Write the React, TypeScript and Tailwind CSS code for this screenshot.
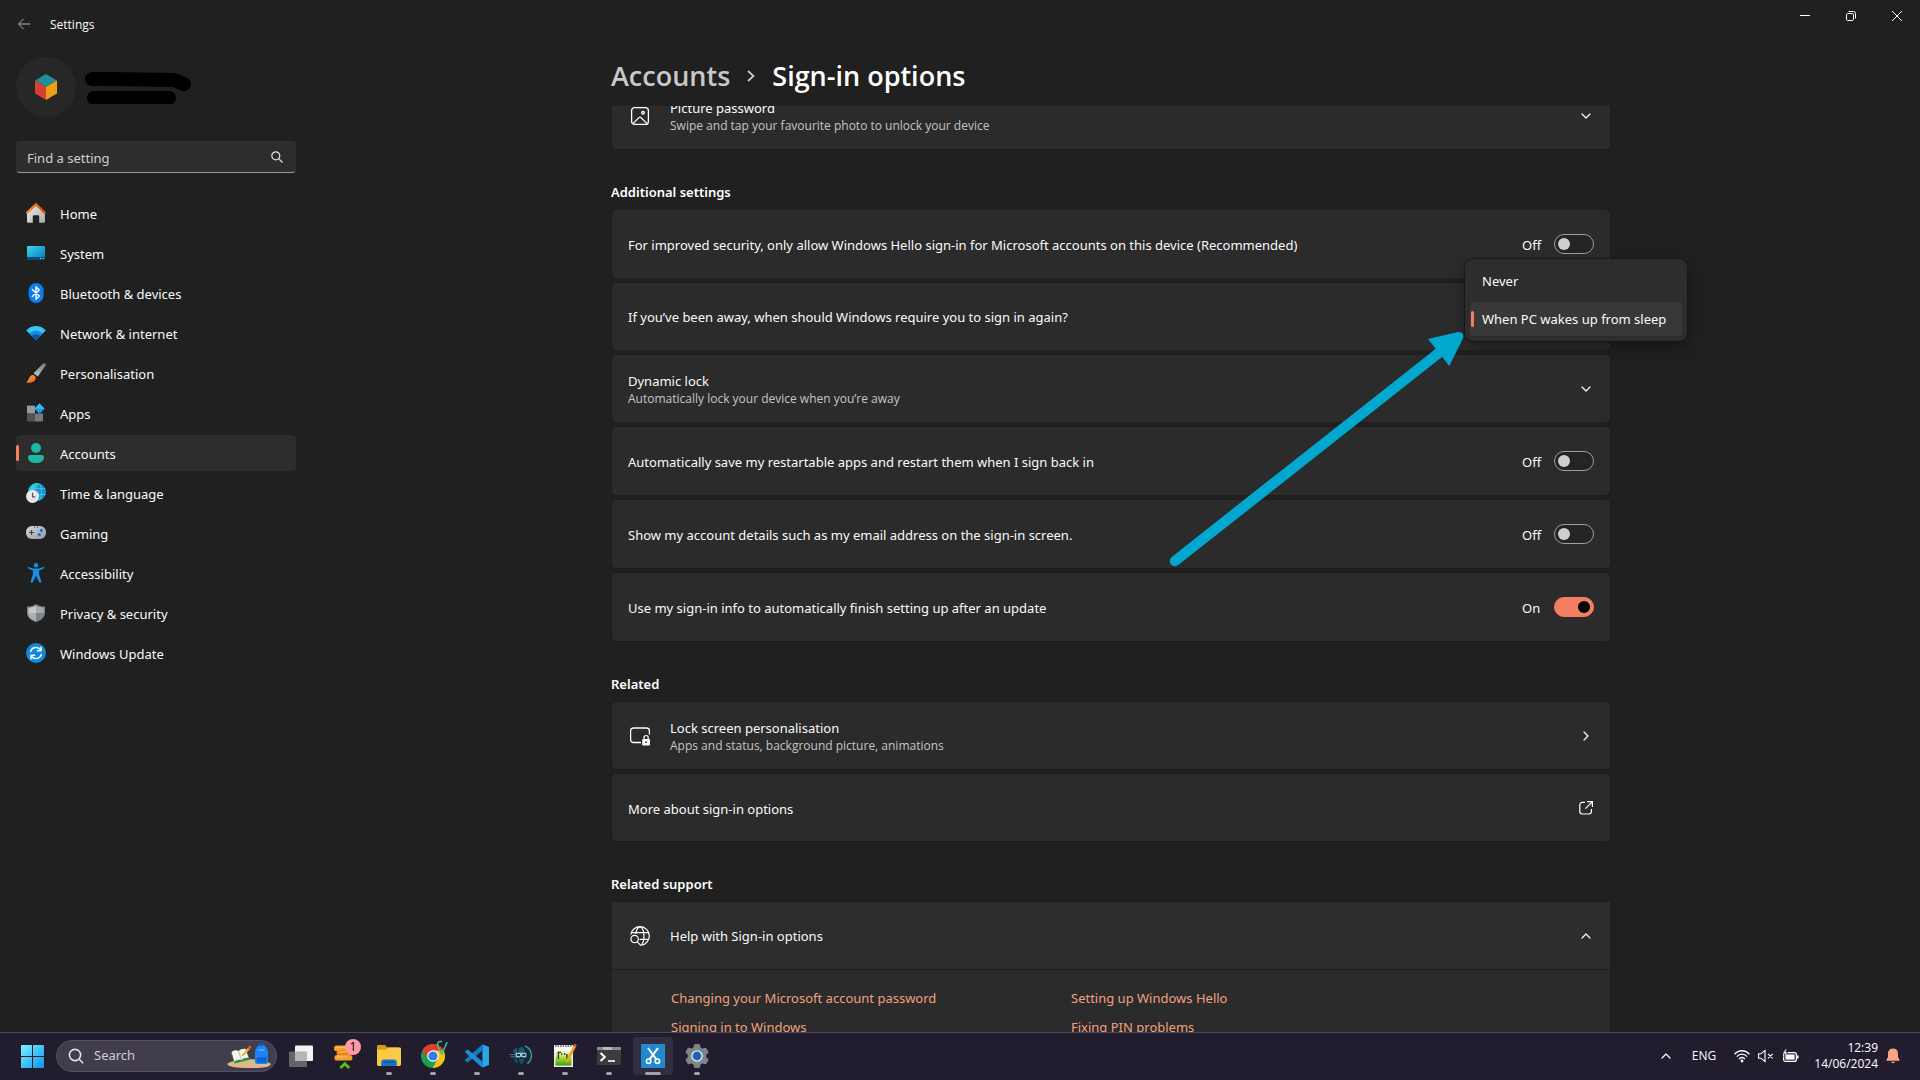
import { useState } from "react";
import type { ReactNode } from "react";
import { ChevronDown, ChevronRight, ChevronUp } from "lucide-react";

/* ---------- Navigation icons ---------- */

const HomeIcon = () => (
  <svg viewBox="0 0 20 20" className="size-5">
    <defs>
      <linearGradient id="homeWall" x1="0" y1="0" x2="1" y2="1">
        <stop offset="0" stopColor="#f0f0f0" />
        <stop offset="1" stopColor="#a8a8a8" />
      </linearGradient>
      <linearGradient id="homeRoof" x1="0" y1="0" x2="1" y2="0">
        <stop offset="0" stopColor="#f59a1b" />
        <stop offset="1" stopColor="#d3500c" />
      </linearGradient>
    </defs>
    <path d="M1 9 L10 2 L19 9 V18.5 a1.3 1.3 0 0 1 -1.3 1.3 H13.2 V13.2 a1 1 0 0 0 -1 -1 H7.8 a1 1 0 0 0 -1 1 V19.8 H2.3 A1.3 1.3 0 0 1 1 18.5 Z" fill="url(#homeWall)" />
    <path d="M1.3 9.6 L10 1.4 L18.7 9.6" fill="none" stroke="url(#homeRoof)" strokeWidth="2.4" strokeLinecap="round" strokeLinejoin="round" />
  </svg>
);

const SystemIcon = () => (
  <svg viewBox="0 0 20 20" className="size-5">
    <defs>
      <linearGradient id="screen" x1="0" y1="0" x2="1" y2="1">
        <stop offset="0" stopColor="#35dbe6" />
        <stop offset="1" stopColor="#0c72c4" />
      </linearGradient>
    </defs>
    <rect x="1" y="3" width="18" height="14" rx="1" fill="url(#screen)" />
    <path d="M1 14 H19 V16 a1 1 0 0 1 -1 1 H2 a1 1 0 0 1 -1 -1 Z" fill="#0a4a78" />
    <path d="M14 15h1v1h-1zM16.5 15h1v1h-1z" fill="#c8e8f8" />
  </svg>
);

const BluetoothIcon = () => (
  <svg viewBox="0 0 20 20" className="size-5">
    <rect x="2.6" y="0" width="15" height="20" rx="7.5" fill="#0a7df2" />
    <path d="M6.3 6.6 L13.3 13 L10 16.2 V3.8 L13.3 7 L6.3 13.4" fill="none" stroke="#fff" strokeWidth="1.4" strokeLinejoin="round" strokeLinecap="round" />
  </svg>
);

const NetworkIcon = () => (
  <svg viewBox="0 0 20 20" className="size-5">
    <path d="M10 17 L0.2 7.4 C5.6 1.6 14.4 1.6 19.8 7.4 Z" fill="#35c5f0" />
    <path d="M10 17 L3.6 10.7 C7 6.8 13 6.8 16.4 10.7 Z" fill="#148ddc" />
    <path d="M10 17 L6 13 C8.2 10.6 11.8 10.6 14 13 Z" fill="#0c53a0" />
  </svg>
);

const BrushIcon = () => (
  <svg viewBox="0 0 20 20" className="size-5">
    <defs>
      <linearGradient id="handle" x1="1" y1="0" x2="0" y2="1">
        <stop offset="0" stopColor="#6f767c" />
        <stop offset="1" stopColor="#c5cbd0" />
      </linearGradient>
      <linearGradient id="bristle" x1="0" y1="0" x2="1" y2="1">
        <stop offset="0" stopColor="#fbb03a" />
        <stop offset="1" stopColor="#ec5b14" />
      </linearGradient>
    </defs>
    <path d="M19.3 0.5 C20 1.2 19.9 2 19.3 3 L11.8 13.4 L7.6 10.2 L16.9 0.8 C17.8 0 18.7 0 19.3 0.5 Z" fill="url(#handle)" />
    <path d="M5.2 12.4 C7.6 10.8 10.8 13.6 9.4 16.6 C8 19.6 3.6 20.4 0.2 19.2 C2.6 18 2.4 14.4 5.2 12.4 Z" fill="url(#bristle)" />
  </svg>
);

const AppsIcon = () => (
  <svg viewBox="0 0 20 20" className="size-5">
    <path d="M1 2.6 h8 v8 h-8z" fill="#969ba3" />
    <path d="M1 10.6 h8 v8 h-7 a1 1 0 0 1 -1 -1z" fill="#4e5359" />
    <path d="M9 10.6 h8 v7 a1 1 0 0 1 -1 1 h-7z" fill="#74797f" />
    <rect x="9.8" y="2" width="7.4" height="7.4" rx="0.8" transform="rotate(45 13.5 5.7)" fill="#1d9be6" />
    <path d="M13.5 0.6 L18.6 5.7 H8.4 Z" fill="#39b9f3" />
  </svg>
);

const AccountsIcon = () => (
  <svg viewBox="0 0 20 20" className="size-5">
    <circle cx="10" cy="5" r="5" fill="#1cb8a4" />
    <path d="M4.2 12 H15.8 A2.2 2.2 0 0 1 18 14.2 C18 18 14.4 20 10 20 C5.6 20 2 18 2 14.2 A2.2 2.2 0 0 1 4.2 12 Z" fill="#1cb8a4" />
  </svg>
);

const TimeIcon = () => (
  <svg viewBox="0 0 20 20" className="size-5">
    <circle cx="11" cy="9" r="9" fill="#1795d4" />
    <path d="M3 5.5 A9 9 0 0 1 13 0.3 L8 9 L2.2 10 Z" fill="#2fc6da" />
    <path d="M3 5.6 H19 M2.5 11.5 H19.6 M8 1 C5.8 6 6 12 8 17 M13.5 0.8 C16 6 16 12 13.5 17.4" fill="none" stroke="#4ccfe6" strokeWidth="0.7" />
    <circle cx="6.6" cy="13.4" r="6.5" fill="#e4e6e8" />
    <path d="M6.6 9.8 V13.8 H9.2" fill="none" stroke="#555" strokeWidth="1.2" />
  </svg>
);

const GamingIcon = () => (
  <svg viewBox="0 0 20 20" className="size-5">
    <defs>
      <linearGradient id="pad" x1="0" y1="0" x2="1" y2="1">
        <stop offset="0" stopColor="#d4d9dd" />
        <stop offset="1" stopColor="#92999f" />
      </linearGradient>
    </defs>
    <rect x="0" y="3" width="20" height="13" rx="6" fill="url(#pad)" />
    <path d="M5.5 7 v5 M3 9.5 h5" stroke="#3c4146" strokeWidth="1.2" />
    <path d="M8 4.2 h1.2 M11 4.2 h1.2" stroke="#3c4146" strokeWidth="1" />
    <circle cx="15.4" cy="7.4" r="1.6" fill="#1377d4" />
    <circle cx="13.4" cy="11.6" r="1.6" fill="#1377d4" />
  </svg>
);

const AccessibilityIcon = () => (
  <svg viewBox="0 0 20 20" className="size-5">
    <circle cx="10" cy="2.2" r="2.2" fill="#1590e4" />
    <path d="M2.4 3.8 C4.6 5.2 7.4 5.6 10 5.6 C12.6 5.6 15.4 5.2 17.6 3.8 C18.4 4.4 18.2 5.4 17.4 5.8 L13 7.6 V11 L15.4 18.8 C15.2 20 14 20.2 13.4 19.4 L10 12.8 L6.6 19.4 C6 20.2 4.8 20 4.6 18.8 L7 11 V7.6 L2.6 5.8 C1.8 5.4 1.6 4.4 2.4 3.8 Z" fill="#1590e4" />
  </svg>
);

const PrivacyIcon = () => (
  <svg viewBox="0 0 20 20" className="size-5">
    <path d="M10 1 C12.5 2.8 15.6 3.6 19 3.6 V9.6 C19 14.2 15.6 17.4 10 19.2 C4.4 17.4 1 14.2 1 9.6 V3.6 C4.4 3.6 7.5 2.8 10 1 Z" fill="#7e848a" />
    <path d="M10 2.6 C12.2 4 14.8 4.8 17.6 4.9 V10 H10 Z" fill="#a3a9af" />
    <path d="M10 2.6 C7.8 4 5.2 4.8 2.4 4.9 V10 C2.6 13.6 5.6 16.4 10 17.8 Z" fill="#c3c8cc" />
    <path d="M2.4 10 H10 V17.8 C5.6 16.4 2.6 13.6 2.4 10 Z" fill="#abb0b5" />
  </svg>
);

const UpdateIcon = () => (
  <svg viewBox="0 0 20 20" className="size-5">
    <circle cx="10" cy="10" r="10" fill="#0f88dd" />
    <path d="M4.6 8.6 A5.6 5.6 0 0 1 14.6 6.8 M15.4 11.4 A5.6 5.6 0 0 1 5.4 13.2" fill="none" stroke="#fff" strokeWidth="1.5" strokeLinecap="round" />
    <path d="M15 4.2 V7.8 H11.4 M5 15.8 V12.2 H8.6" fill="none" stroke="#fff" strokeWidth="1.5" strokeLinecap="round" strokeLinejoin="round" />
  </svg>
);

const navItems: { label: string; icon: ReactNode; active?: boolean }[] = [
  { label: "Home", icon: <HomeIcon /> },
  { label: "System", icon: <SystemIcon /> },
  { label: "Bluetooth & devices", icon: <BluetoothIcon /> },
  { label: "Network & internet", icon: <NetworkIcon /> },
  { label: "Personalisation", icon: <BrushIcon /> },
  { label: "Apps", icon: <AppsIcon /> },
  { label: "Accounts", icon: <AccountsIcon />, active: true },
  { label: "Time & language", icon: <TimeIcon /> },
  { label: "Gaming", icon: <GamingIcon /> },
  { label: "Accessibility", icon: <AccessibilityIcon /> },
  { label: "Privacy & security", icon: <PrivacyIcon /> },
  { label: "Windows Update", icon: <UpdateIcon /> },
];

/* ---------- Title bar and sidebar ---------- */

function TitleBar() {
  return (
    <header className="flex h-12 shrink-0 items-start justify-between">
      <div className="flex h-12 items-center gap-2 pl-2">
        <button aria-label="Back" className="flex h-8 w-8 items-center justify-center text-[#b0b0b0]">
          <svg viewBox="0 0 12 12" className="size-3" fill="none" stroke="currentColor" strokeWidth="1">
            <path d="M12 6 H0.7 M5.6 0.8 L0.6 6 L5.6 11.2" />
          </svg>
        </button>
        <span className="pl-0.5 pt-0.5 text-xs font-['Open_Sans']">Settings</span>
      </div>
      <div className="flex h-8 text-white">
        <button aria-label="Minimise" className="flex w-[46px] items-center justify-center">
          <svg viewBox="0 0 10 10" className="size-2.5" fill="none" stroke="currentColor"><path d="M0 4.5 H10" /></svg>
        </button>
        <button aria-label="Restore" className="flex w-[46px] items-center justify-center">
          <svg viewBox="0 0 10 10" className="size-2.5" fill="none" stroke="currentColor">
            <rect x="0.5" y="2.5" width="7" height="7" rx="1.2" />
            <path d="M2.5 0.5 H7.5 A2 2 0 0 1 9.5 2.5 V7.5" />
          </svg>
        </button>
        <button aria-label="Close" className="flex w-[46px] items-center justify-center">
          <svg viewBox="0 0 10 10" className="size-2.5" fill="none" stroke="currentColor"><path d="M0 0 L10 10 M10 0 L0 10" /></svg>
        </button>
      </div>
    </header>
  );
}

function Sidebar() {
  return (
    <aside className="flex w-[312px] shrink-0 flex-col px-4 pt-[9px]">
      <div className="flex items-center gap-2">
        <div className="flex size-[60px] items-center justify-center rounded-full bg-[#272727]">
          <svg viewBox="0 0 22 26" className="h-[26px] w-[22px]">
            <path d="M11 0 L22 6.5 L11 13 L0 6.5 Z" fill="#1f8e99" />
            <path d="M0 6.5 L11 13 V26 L0 19.5 Z" fill="#d93d33" />
            <path d="M22 6.5 L11 13 V26 L22 19.5 Z" fill="#eaa014" />
          </svg>
        </div>
        <svg viewBox="0 0 110 34" className="h-[34px] w-[110px]" fill="none" stroke="#000" strokeWidth="14" strokeLinecap="round" strokeLinejoin="round">
          <path d="M8 9 H24 L90 10 L100 14" />
          <path d="M10 28 H85" />
        </svg>
      </div>
      <div className="mt-6 flex h-8 items-center rounded-[4px] border border-b-[#9a9a9a] border-t-[#303030] border-x-[#303030] bg-[#2d2d2d] pl-2.5 pr-3">
        <input type="search" aria-label="Find a setting" placeholder="Find a setting" className="min-w-0 flex-1 bg-transparent pt-px text-[13px] leading-5 outline-none placeholder:text-[#cfcfcf]" />
        <svg viewBox="0 0 12 12" className="size-3 text-[#e0e0e0]" fill="none" stroke="currentColor" strokeWidth="1.2">
          <circle cx="4.8" cy="4.8" r="4" />
          <path d="M7.8 7.8 L11.5 11.5" />
        </svg>
      </div>
      <nav className="mt-[22px] flex flex-col gap-1">
        {navItems.map((item) => (
          <a
            key={item.label}
            href="#"
            aria-current={item.active ? "page" : undefined}
            className={
              item.active
                ? "relative flex h-9 items-center gap-3.5 rounded-[4px] bg-[#2d2d2d] px-2.5 text-[13px] leading-5"
                : "relative flex h-9 items-center gap-3.5 rounded-[4px] px-2.5 text-[13px] leading-5"
            }
          >
            {item.active && <span className="absolute left-0 top-2.5 h-4 w-[3px] rounded-full bg-[#f37f63]" />}
            {item.icon}
            <span className="pt-0.5">{item.label}</span>
          </a>
        ))}
      </nav>
    </aside>
  );
}

/* ---------- Main content ---------- */

const cardClass = "relative flex items-center rounded-[5px] border border-[#1d1d1d] bg-[#2b2b2b] px-4";

function Row({ title, subtitle, icon, end, tall = false }: { title: string; subtitle?: string; icon?: ReactNode; end?: ReactNode; tall?: boolean }) {
  return (
    <div className={tall ? `${cardClass} min-h-[70px]` : `${cardClass} min-h-[69px]`}>
      {icon && <span className="mr-[18px] flex w-6 justify-center">{icon}</span>}
      <div className="flex-1">
        <p className={subtitle ? "text-[13px] leading-5" : "pt-0.5 text-[13px] leading-5"}>{title}</p>
        {subtitle && <p className="font-['Open_Sans'] text-xs text-[#c5c5c5]">{subtitle}</p>}
      </div>
      {end}
    </div>
  );
}

function ToggleRow({ title, initial }: { title: string; initial: boolean }) {
  const [on, setOn] = useState(initial);
  return (
    <Row
      title={title}
      tall
      end={
        <label className="flex items-center text-[13px] leading-5">
          <span className="w-8 pt-0.5">{on ? "On" : "Off"}</span>
          <input
            type="checkbox"
            role="switch"
            aria-label={title}
            checked={on}
            onChange={(e) => setOn(e.target.checked)}
            className="flex h-5 w-10 appearance-none items-center rounded-full border border-[#9f9f9f] bg-[#242424] px-[3px] before:size-3 before:rounded-full before:bg-[#cfcfcf] checked:justify-end checked:border-[#f37f63] checked:bg-[#f37f63] checked:before:bg-black"
          />
        </label>
      }
    />
  );
}

function SectionTitle({ children }: { children: ReactNode }) {
  return <h2 className="mb-[7px] mt-8 text-[13px] font-semibold leading-5 text-white">{children}</h2>;
}

const Expand = ({ label }: { label: string }) => (
  <button aria-label={label} className="text-white">
    <ChevronDown className="size-4" strokeWidth={1.8} />
  </button>
);

function AwayRow() {
  const [choice, setChoice] = useState("When PC wakes up from sleep");
  return (
    <div className={`${cardClass} z-10 min-h-[69px]`}>
      <p className="flex-1 text-[13px] leading-5">If you’ve been away, when should Windows require you to sign in again?</p>
      <div
        role="listbox"
        aria-label="Require sign-in"
        className="absolute -right-[77px] -top-6 flex w-[222px] flex-col gap-1 rounded-lg bg-[#2d2d2d] p-[5px] shadow-[0_6px_14px_rgba(0,0,0,0.35),0_0_0_1px_#1c1c1c]"
      >
        {["Never", "When PC wakes up from sleep"].map((option) => (
          <button
            key={option}
            role="option"
            aria-selected={choice === option}
            onClick={() => setChoice(option)}
            className={
              choice === option
                ? "relative flex h-[34px] items-center whitespace-nowrap rounded-[4px] bg-[#383838] pl-3 text-left text-[13px] leading-5"
                : "relative flex h-[34px] items-center whitespace-nowrap rounded-[4px] pl-3 text-left text-[13px] leading-5"
            }
          >
            {choice === option && <span className="absolute left-px top-[9px] h-4 w-[3px] rounded-full bg-[#f37f63]" />}
            {option}
          </button>
        ))}
      </div>
      <svg viewBox="0 0 305 244" className="pointer-events-none absolute right-[140px] top-11 h-[244px] w-[305px]">
        <path d="M10 234 L275 25" stroke="#00a8d0" strokeWidth="10.5" strokeLinecap="round" />
        <path d="M263 12 L292 5.2 C297 4.2 300 8 297.6 12 L284.3 39 Z" fill="#00a8d0" />
      </svg>
    </div>
  );
}

const PictureIcon = () => (
  <svg viewBox="0 0 20 20" className="size-5" fill="none" stroke="#fff" strokeWidth="1.3">
    <rect x="1.6" y="1.6" width="16.8" height="16.8" rx="3" />
    <circle cx="13" cy="6.8" r="1.3" />
    <path d="M3.2 17.4 L9 11.6 a1.4 1.4 0 0 1 2 0 L16.8 17.4" />
  </svg>
);

const LockScreenIcon = () => (
  <svg viewBox="0 0 20 20" className="size-5" fill="none">
    <path d="M11 16.5 H3.4 A2.8 2.8 0 0 1 0.6 13.7 V4.8 A2.8 2.8 0 0 1 3.4 2 H16.6 A2.8 2.8 0 0 1 19.4 4.8 V8.6" stroke="#fff" strokeWidth="1.3" />
    <rect x="12.2" y="13" width="7.8" height="6.6" rx="1" fill="#fff" />
    <path d="M14 13 V11.6 a2.1 2.1 0 0 1 4.2 0 V13" stroke="#fff" strokeWidth="1.2" />
    <circle cx="16.1" cy="16.2" r="0.9" fill="#2b2b2b" />
  </svg>
);

const GlobeSearchIcon = () => (
  <svg viewBox="0 0 20 20" className="size-5" fill="none" stroke="#fff" strokeWidth="1.2">
    <path d="M0.8 8.6 A9.3 9.3 0 1 1 11.4 19.2" />
    <path d="M1.4 6.7 H18.6 M9.6 13.3 H18.6" />
    <path d="M5.8 8 C6 4 8 0.8 10 0.8 C12 0.8 14 4.4 14 10 C14 14.4 12.8 17.4 11.4 18.8" />
    <circle cx="4.6" cy="13" r="3.7" />
    <path d="M7.3 15.8 L11 19.6" />
  </svg>
);

function Content() {
  return (
    <main className="flex min-w-0 flex-1 flex-col pr-2.5">
      <div className="mx-auto flex w-full max-w-[1000px] items-center gap-[17px] pb-3 pt-2.5 font-['Open_Sans'] text-[27px] font-semibold leading-9">
        <a href="#" className="text-[#c8c8c8]">Accounts</a>
        <svg viewBox="0 0 8 12" className="h-3 w-2" fill="none" stroke="#c8c8c8" strokeWidth="1.8"><path d="M1 1 L6.5 6 L1 11" /></svg>
        <h1 className="text-white">Sign-in options</h1>
      </div>
      <div className="min-h-0 flex-1 overflow-hidden">
        <div className="mx-auto -mt-[25px] w-full max-w-[1000px]">
          <Row title="Picture password" subtitle="Swipe and tap your favourite photo to unlock your device" icon={<PictureIcon />} end={<Expand label="Expand picture password" />} />

          <SectionTitle>Additional settings</SectionTitle>
          <div className="flex flex-col gap-[3px]">
            <ToggleRow title="For improved security, only allow Windows Hello sign-in for Microsoft accounts on this device (Recommended)" initial={false} />
            <AwayRow />
            <Row title="Dynamic lock" subtitle="Automatically lock your device when you’re away" end={<Expand label="Expand dynamic lock" />} />
            <ToggleRow title="Automatically save my restartable apps and restart them when I sign back in" initial={false} />
            <ToggleRow title="Show my account details such as my email address on the sign-in screen." initial={false} />
            <ToggleRow title="Use my sign-in info to automatically finish setting up after an update" initial={true} />
          </div>

          <SectionTitle>Related</SectionTitle>
          <div className="flex flex-col gap-[3px]">
            <Row
              title="Lock screen personalisation"
              subtitle="Apps and status, background picture, animations"
              icon={<LockScreenIcon />}
              end={<a href="#" aria-label="Open lock screen personalisation"><ChevronRight className="size-4" strokeWidth={1.8} /></a>}
            />
            <Row
              title="More about sign-in options"
              end={
                <a href="#" aria-label="Open in browser">
                  <svg viewBox="0 0 16 16" className="size-4" fill="none" stroke="#fff" strokeWidth="1.2">
                    <path d="M7 2.4 H4.2 A2.4 2.4 0 0 0 1.8 4.8 V11.6 A2.4 2.4 0 0 0 4.2 14 H11 A2.4 2.4 0 0 0 13.4 11.6 V9" />
                    <path d="M9 1.6 H14.4 V7 M14.4 1.6 L7.4 8.6" />
                  </svg>
                </a>
              }
            />
          </div>

          <SectionTitle>Related support</SectionTitle>
          <div className="rounded-[5px] border border-[#1d1d1d] bg-[#2b2b2b]">
            <div className="flex h-[68px] items-center border-b border-[#1d1d1d] bg-[#2d2d2d] px-4">
              <span className="mr-[18px] flex w-6 justify-center"><GlobeSearchIcon /></span>
              <p className="flex-1 text-[13px] leading-5">Help with Sign-in options</p>
              <button aria-label="Collapse help"><ChevronUp className="size-4" strokeWidth={1.8} /></button>
            </div>
            <div className="grid grid-cols-[400px_400px] gap-y-[9px] py-[18px] pl-[59px] text-[13px] leading-5 text-[#f0a080]">
              <a href="#">Changing your Microsoft account password</a>
              <a href="#">Setting up Windows Hello</a>
              <a href="#">Signing in to Windows</a>
              <a href="#">Fixing PIN problems</a>
            </div>
          </div>
        </div>
      </div>
    </main>
  );
}

/* ---------- Taskbar ---------- */

const StartIcon = () => (
  <svg viewBox="0 0 23 23" className="size-[23px]">
    <defs>
      <linearGradient id="start" x1="0" y1="0" x2="23" y2="23" gradientUnits="userSpaceOnUse">
        <stop offset="0" stopColor="#7df0ff" />
        <stop offset="1" stopColor="#0a95f2" />
      </linearGradient>
    </defs>
    <path d="M0.6 0 H11 V11 H0 V0.6 Z M12 0 H22.4 L23 0.6 V11 H12 Z M0 12 H11 V23 H0.6 L0 22.4 Z M12 12 H23 V22.4 L22.4 23 H12 Z" fill="url(#start)" />
  </svg>
);

const SchoolArt = () => (
  <svg viewBox="0 0 46 26" className="h-[26px] w-[46px]">
    <path d="M1 21 C8 14.5 38 14.5 45 21 C43 25 36 25 23 25 C10 25 3 24 1 21 Z" fill="#dcb88a" />
    <path d="M5 10 L20 6.4 L24 16.4 L8.6 20.6 Z" fill="#2d8f4e" />
    <path d="M5.6 9 C8 7 10.6 7 12.6 8 C14.6 6 17.4 5.4 19.6 6 L22.6 15 C20 14.4 17.4 15.2 15.4 17.2 C13 16.4 10.6 17 8.4 18.8 Z" fill="#f7f5ee" />
    <path d="M12.6 8 L15.4 17.2" stroke="#b8b5ac" strokeWidth="0.9" />
    <path d="M15.4 12.6 L22 4.4 L24 6 L17.4 13.2 Z" fill="#f4b02c" />
    <path d="M21.4 5 L23.6 2.4 L25.8 4.2 L23.6 6.8 Z" fill="#e5503c" />
    <path d="M32 4 C32.4 -0.4 38.6 -0.4 39 4" fill="none" stroke="#1259b8" strokeWidth="1.6" />
    <path d="M29 10 C29 5 31.4 2.2 35.5 2.2 C39.6 2.2 42 5 42 10 V19 A2 2 0 0 1 40 21 H31 A2 2 0 0 1 29 19 Z" fill="#1b83f4" />
    <path d="M30.6 14.4 H40.4 V18 A1.6 1.6 0 0 1 38.8 19.6 H32.2 A1.6 1.6 0 0 1 30.6 18 Z" fill="#0f5fd0" />
    <path d="M32.6 7 H38.4" stroke="#67c4ff" strokeWidth="1.2" />
  </svg>
);

const TaskViewIcon = () => (
  <svg viewBox="0 0 24 24" className="size-6">
    <rect x="0" y="7.5" width="18" height="15.5" rx="1" fill="#666469" />
    <rect x="6" y="1.5" width="18" height="15.5" rx="1" fill="#f2f2f2" />
    <path d="M6 7.5 H18 V17 H6 Z" fill="#b5b5b8" />
  </svg>
);

const CoinsIcon = () => (
  <svg viewBox="0 0 28 30" className="h-[30px] w-7">
    <rect x="3" y="4.4" width="17" height="5.6" rx="2.6" fill="#f5a02c" />
    <rect x="5.4" y="9.4" width="16" height="5" rx="2.4" fill="#e8841a" />
    <rect x="3.4" y="14" width="18" height="5.6" rx="2.6" fill="#f5a02c" />
    <path d="M5 6.2 H14 M7.4 11 H15 M5.4 15.8 H16" stroke="#ffc765" strokeWidth="1" />
    <path d="M9.4 27 L13.8 22.8 L18.2 27" fill="none" stroke="#57c016" strokeWidth="2.8" />
  </svg>
);

const FolderIcon = () => (
  <svg viewBox="0 0 24 24" className="size-6">
    <path d="M0 2.5 A1.5 1.5 0 0 1 1.5 1 H8 L10.5 3.5 H22 V8 H0 Z" fill="#d89a12" />
    <path d="M0 5.6 H9 L11 3.6 H22.6 A1.4 1.4 0 0 1 24 5 V20.6 A1.4 1.4 0 0 1 22.6 22 H1.4 A1.4 1.4 0 0 1 0 20.6 Z" fill="#fccb45" />
    <path d="M4.2 22 V18.6 A3 3 0 0 1 7.2 15.6 H16.8 A3 3 0 0 1 19.8 18.6 V22 Z" fill="#1673c9" />
    <path d="M7 18.2 H17" stroke="#0c4f94" strokeWidth="1.2" />
  </svg>
);

const ChromeIcon = () => (
  <svg viewBox="0 0 30 32" className="h-8 w-[30px]">
    <circle cx="15" cy="16" r="12" fill="#1f9d51" />
    <path d="M15 16 L4.6 10 A12 12 0 0 1 25.4 10 Z" fill="#e33b2e" />
    <path d="M15 10.4 H25.6 A12 12 0 0 1 14.6 28 L20 18.6 Z" fill="#fbc116" />
    <path d="M4.6 10 L10.2 19 L15 16 L15 10.4 Z" fill="#e33b2e" />
    <circle cx="15" cy="16" r="5.8" fill="#fff" />
    <circle cx="15" cy="16" r="4.6" fill="#2f7de9" />
    <path d="M24 1.6 C19.6 0.6 18.4 4 20.4 7.6 L24 14 L29.2 2" fill="none" stroke="#3fc08c" strokeWidth="1.5" />
  </svg>
);

const CodeIcon = () => (
  <svg viewBox="0 0 24 24" className="size-6">
    <path d="M17.4 0.2 L24 3 V21 L17.4 23.8 Z" fill="#2ba5ea" />
    <path d="M17.4 0.2 L17.4 6.6 L3.4 18 L1.8 18.2 L0.2 16.6 V15.4 Z" fill="#1179be" />
    <path d="M17.4 23.8 L17.4 17.4 L3.4 6 L1.8 5.8 L0.2 7.4 V8.6 Z" fill="#1b8fd6" />
  </svg>
);

const OrbIcon = () => (
  <svg viewBox="0 0 24 24" className="size-6">
    <circle cx="12.4" cy="11.4" r="10" fill="#14283c" />
    <path d="M4 6.6 C7 2.6 14 2 17.4 5.4 L16 9 H5 Z" fill="#235872" />
    <path d="M5 15 H17 L16 18.6 C13 20.6 8.6 20 6 17.6 Z" fill="#1d4a66" />
    <path d="M10 2.4 C8 6 8 16 10.6 20.4 M15 3.4 C17.4 7 17.4 15 15 19.4" stroke="#0d1c2c" strokeWidth="1.2" fill="none" />
    <path d="M0.6 10.6 H6 M1.6 12.8 H6" stroke="#4c8ba0" strokeWidth="0.9" />
    <path d="M6.6 8.8 H17.4 V13.6 H13.6 L12.4 12.4 L11 13.6 H6.6 Z" fill="#9cc6d4" />
    <path d="M8 10 H11 V12 H8 Z M13.4 10 H16.2 V12 H13.4 Z" fill="#1b3c50" />
    <path d="M16 2 A10.2 10.2 0 0 1 18.4 19.6" stroke="#3a9a8c" strokeWidth="1.4" fill="none" />
  </svg>
);

const NotepadIcon = () => (
  <svg viewBox="0 0 24 26" className="h-[26px] w-6">
    <defs>
      <linearGradient id="note" x1="0" y1="0" x2="0" y2="1">
        <stop offset="0.15" stopColor="#fdfdfd" />
        <stop offset="0.55" stopColor="#b5e23c" />
        <stop offset="1" stopColor="#3f9a16" />
      </linearGradient>
    </defs>
    <rect x="1" y="2" width="19" height="22" fill="#f2f2f2" />
    <rect x="2.4" y="4" width="16.2" height="18.6" fill="url(#note)" />
    <path d="M2 3 H19" stroke="#888" strokeWidth="2" strokeDasharray="1.5 1" />
    <path d="M5.4 8.6 V16 M5 9.4 H8 M8 11 H9.4 M11 11 H12.4 M14 11 V16" stroke="#333" strokeWidth="1.3" />
    <path d="M13 17.4 L20.4 2.4 L23 3.8 L15.4 18.4 L12.8 20 Z" fill="#efa427" />
    <path d="M20.4 2.4 L21.4 0.6 L23.8 2 L23 3.8 Z" fill="#d0564a" />
  </svg>
);

const TerminalIcon = () => (
  <svg viewBox="0 0 24 20" className="h-5 w-6">
    <rect x="0" y="1" width="24" height="18" rx="1" fill="#3d3d3d" />
    <path d="M1 1 H23 A1 1 0 0 1 24 2 V4 H0 V2 A1 1 0 0 1 1 1 Z" fill="#8c8c8c" />
    <path d="M6 1 H15 V4 H6 Z" fill="#b9b9b9" />
    <path d="M3.6 7 L7.8 11 L3.6 15" fill="none" stroke="#fff" strokeWidth="2" />
    <path d="M11 15 H18" stroke="#fff" strokeWidth="1.6" />
  </svg>
);

const SnipIcon = () => (
  <svg viewBox="0 0 24 24" className="size-6">
    <rect width="24" height="24" rx="1" fill="#2288cf" />
    <path d="M7 4 L15.4 15.4 M17 4 L8.6 15.4" stroke="#fff" strokeWidth="2" />
    <circle cx="7.6" cy="17.2" r="2.2" fill="none" stroke="#fff" strokeWidth="1.6" />
    <circle cx="16.4" cy="17.2" r="2.2" fill="none" stroke="#fff" strokeWidth="1.6" />
  </svg>
);

const GearIcon = () => (
  <svg viewBox="0 0 24 24" className="size-6">
    <path
      d="M9.6 0.6 H14.4 L15.2 3.8 L17.4 5.1 L20.7 4.1 L23.2 8.3 L20.8 10.7 V13.3 L23.2 15.7 L20.7 19.9 L17.4 18.9 L15.2 20.2 L14.4 23.4 H9.6 L8.8 20.2 L6.6 18.9 L3.3 19.9 L0.8 15.7 L3.2 13.3 V10.7 L0.8 8.3 L3.3 4.1 L6.6 5.1 L8.8 3.8 Z"
      fill="#7e868d"
      stroke="#7e868d"
      strokeWidth="1"
      strokeLinejoin="round"
    />
    <circle cx="12" cy="12" r="5.8" fill="#e6eaee" />
    <circle cx="12" cy="12" r="4.4" fill="#1666b4" />
  </svg>
);

const apps: { name: string; icon: ReactNode; state: "idle" | "running" | "active"; badge?: string }[] = [
  { name: "Task view", icon: <TaskViewIcon />, state: "idle" },
  { name: "Finance", icon: <CoinsIcon />, state: "idle", badge: "1" },
  { name: "File Explorer", icon: <FolderIcon />, state: "running" },
  { name: "Chrome", icon: <ChromeIcon />, state: "running" },
  { name: "Visual Studio Code", icon: <CodeIcon />, state: "running" },
  { name: "Orb", icon: <OrbIcon />, state: "running" },
  { name: "Notepad++", icon: <NotepadIcon />, state: "running" },
  { name: "Terminal", icon: <TerminalIcon />, state: "running" },
  { name: "Snipping Tool", icon: <SnipIcon />, state: "active" },
  { name: "Settings", icon: <GearIcon />, state: "running" },
];

function Taskbar() {
  return (
    <footer className="flex h-12 shrink-0 items-center justify-between border-t border-[#4b4857] bg-[#211d2f] pb-px pl-3 pr-5 font-['Open_Sans']">
      <div className="flex items-center gap-1">
        <button aria-label="Start" className="flex size-10 items-center justify-center"><StartIcon /></button>
        <label className="flex h-8 w-[221px] items-center rounded-full border border-[#555163] bg-[#413d4c] pl-[11px] pr-1">
          <svg viewBox="0 0 16 16" className="size-4" fill="none" stroke="#e4e4e8" strokeWidth="1.6">
            <circle cx="7" cy="7" r="5.6" />
            <path d="M11.2 11.2 L15.2 15.2" />
          </svg>
          <input type="search" aria-label="Search" placeholder="Search" className="min-w-0 flex-1 bg-transparent pl-2.5 font-['Noto_Sans'] text-[13px] outline-none placeholder:text-[#cfcdd4]" />
          <SchoolArt />
        </label>
        {apps.map((app) => (
          <button
            key={app.name}
            aria-label={app.name}
            className={
              app.state === "active"
                ? "relative flex h-[38px] w-10 items-center justify-center rounded-[4px] bg-[#312e3f]"
                : "relative flex h-[38px] w-10 items-center justify-center rounded-[4px]"
            }
          >
            {app.icon}
            {app.badge && (
              <span className="absolute right-1 top-0.5 flex size-4 items-center justify-center rounded-full bg-[#ff99a4] text-xs text-black">{app.badge}</span>
            )}
            {app.state === "running" && <span className="absolute bottom-0 left-[17px] h-[3px] w-1.5 rounded-full bg-[#a3a0ab]" />}
            {app.state === "active" && <span className="absolute bottom-0 left-3 h-[3px] w-4 rounded-full bg-[#a3a0ab]" />}
          </button>
        ))}
      </div>
      <div className="flex items-center text-xs text-white">
        <button aria-label="Show hidden icons" className="mr-[18px]"><ChevronUp className="size-4" strokeWidth={1.8} /></button>
        <button className="mr-[18px]">ENG</button>
        <button aria-label="Network, volume and battery" className="mr-[15px] flex items-center gap-2">
          <svg viewBox="0 0 16 14" className="h-3.5 w-4" fill="none" stroke="#fff" strokeWidth="1.3">
            <path d="M0.6 5.2 C4.8 0.6 11.2 0.6 15.4 5.2 M2.8 7.6 C5.8 4.4 10.2 4.4 13.2 7.6 M5 10 C6.8 8.2 9.2 8.2 11 10" />
            <circle cx="8" cy="12" r="1.4" fill="#fff" stroke="none" />
          </svg>
          <svg viewBox="0 0 16 14" className="h-3.5 w-4" fill="none" stroke="#fff" strokeWidth="1.1">
            <path d="M0.6 4.8 H3 L7 1.4 V12.6 L3 9.2 H0.6 Z M10 4.8 L14.6 9.4 M14.6 4.8 L10 9.4" />
          </svg>
          <svg viewBox="0 0 17 14" className="h-3.5 w-[17px]" fill="none">
            <rect x="1.6" y="3.6" width="12.8" height="8.8" rx="2" stroke="#fff" strokeWidth="1.2" />
            <rect x="3.4" y="5.4" width="9.2" height="5.2" fill="#fff" />
            <path d="M15 6.4 h1.6 v3.2 H15z" fill="#fff" />
            <path d="M3.6 0 L0.6 4.6 H2.8 L1.8 8 L5.8 3.2 H3.6 L4.8 0 Z" fill="#fff" stroke="#211d2f" strokeWidth="0.5" />
          </svg>
        </button>
        <button className="mr-2 text-right leading-4">
          <span className="block">12:39</span>
          <span className="block">14/06/2024</span>
        </button>
        <button aria-label="Notifications">
          <svg viewBox="0 0 14 16" className="h-4 w-3.5" fill="#f9a584">
            <path d="M7 0.4 A5 5 0 0 1 12 5.4 V9 L13.6 12 A0.6 0.6 0 0 1 13 12.8 H1 A0.6 0.6 0 0 1 0.4 12 L2 9 V5.4 A5 5 0 0 1 7 0.4 Z M4.8 13.8 H9.2 A2.3 2 0 0 1 4.8 13.8 Z" />
          </svg>
        </button>
      </div>
    </footer>
  );
}

export default function App() {
  return (
    <div className="flex h-screen flex-col overflow-hidden bg-[#202020] font-['Noto_Sans','Open_Sans',sans-serif] text-[#fafafa]">
      <TitleBar />
      <div className="flex min-h-0 flex-1">
        <Sidebar />
        <Content />
      </div>
      <Taskbar />
    </div>
  );
}
